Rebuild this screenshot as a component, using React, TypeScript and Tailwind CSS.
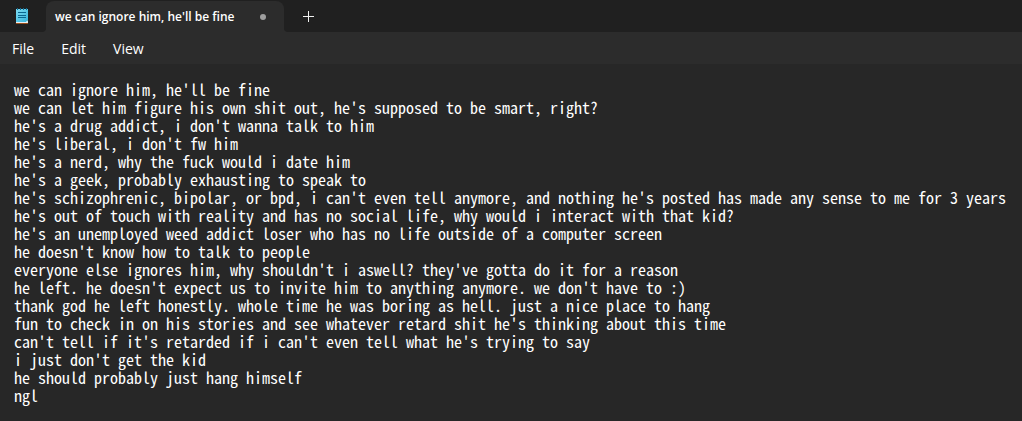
import { useState } from "react";

const initialText = [
  "we can ignore him, he'll be fine",
  "we can let him figure his own shit out, he's supposed to be smart, right?",
  "he's a drug addict, i don't wanna talk to him",
  "he's liberal, i don't fw him",
  "he's a nerd, why the fuck would i date him",
  "he's a geek, probably exhausting to speak to",
  "he's schizophrenic, bipolar, or bpd, i can't even tell anymore, and nothing he's posted has made any sense to me for 3 years",
  "he's out of touch with reality and has no social life, why would i interact with that kid?",
  "he's an unemployed weed addict loser who has no life outside of a computer screen",
  "he doesn't know how to talk to people",
  "everyone else ignores him, why shouldn't i aswell? they've gotta do it for a reason",
  "he left. he doesn't expect us to invite him to anything anymore. we don't have to :)",
  "thank god he left honestly. whole time he was boring as hell. just a nice place to hang",
  "fun to check in on his stories and see whatever retard shit he's thinking about this time",
  "can't tell if it's retarded if i can't even tell what he's trying to say",
  "i just don't get the kid",
  "he should probably just hang himself",
  "ngl",
].join("\n");

function NotepadIcon() {
  return (
    <svg className="h-4 w-3 shrink-0" viewBox="0 0 12 16" aria-hidden="true">
      <defs>
        <linearGradient id="paper" x1="0" y1="0" x2="1" y2="1">
          <stop offset="0" stopColor="#7fdcf2" />
          <stop offset="1" stopColor="#35b4dc" />
        </linearGradient>
      </defs>
      <rect x="0" y="13" width="12" height="3" rx="0.5" fill="#9a4f1c" />
      <rect x="0" y="13" width="12" height="2" fill="#e9eef0" />
      <path d="M0 1h12v11L10 14H0z" fill="url(#paper)" />
      <path d="M10 14L12 12V14z" fill="#c7eef8" />
      <path d="M1.5 0v2M4.5 0v2M7.5 0v2M10.5 0v2" stroke="#0f6c94" strokeWidth="1" />
      <path d="M2 4.5h8M2 7.5h8M2 9.5h8" stroke="#0b6790" strokeWidth="1" />
    </svg>
  );
}

function TabCorner({ side }: { side: "left" | "right" }) {
  return (
    <svg className="h-1 w-1 shrink-0 self-end" viewBox="0 0 4 4" aria-hidden="true">
      <path d={side === "left" ? "M4 0v4H0a4 4 0 0 0 4-4z" : "M0 0v4h4a4 4 0 0 1-4-4z"} fill="#2c2c2c" />
    </svg>
  );
}

function TitleBar() {
  return (
    <header className="flex h-8 bg-[#202020]">
      <div className="flex w-[42px] items-center pl-4">
        <NotepadIcon />
      </div>
      <TabCorner side="left" />
      <div role="tablist" className="flex pt-px">
        <button
          role="tab"
          aria-selected="true"
          className="flex w-[238px] items-center justify-between rounded-t-lg bg-[#2c2c2c] pr-[18px] pl-[9px] text-xs font-semibold whitespace-nowrap text-white"
        >
          we can ignore him, he'll be fine
          <span className="size-1.5 rounded-full bg-[#9f9f9f]" />
        </button>
      </div>
      <TabCorner side="right" />
      <button aria-label="New tab" className="flex w-10 items-center justify-center text-[#f0f0f0]">
        <svg className="size-[11px]" viewBox="0 0 11 11" aria-hidden="true">
          <path d="M5.5 0v11M0 5.5h11" stroke="currentColor" />
        </svg>
      </button>
    </header>
  );
}

function MenuBar() {
  return (
    <nav className="flex h-8 items-center gap-[27px] bg-[#2c2c2c] px-3 pt-0.5 text-sm text-white">
      <button>File</button>
      <button>Edit</button>
      <button>View</button>
    </nav>
  );
}

export default function App() {
  const [text, setText] = useState(initialText);
  return (
    <div className="flex min-h-screen flex-col bg-[#272727] font-['Open_Sans','Noto_Sans',sans-serif]">
      <TitleBar />
      <MenuBar />
      <textarea
        aria-label="Text editor"
        wrap="off"
        spellCheck={false}
        rows={18}
        value={text}
        onChange={(e) => setText(e.target.value)}
        className="block w-full flex-1 resize-none overflow-auto bg-[#272727] px-3.5 pt-4 font-['Noto_Sans_Mono_CJK_SC','Liberation_Mono',monospace] text-base leading-[18px] text-white outline-none"
      />
    </div>
  );
}
